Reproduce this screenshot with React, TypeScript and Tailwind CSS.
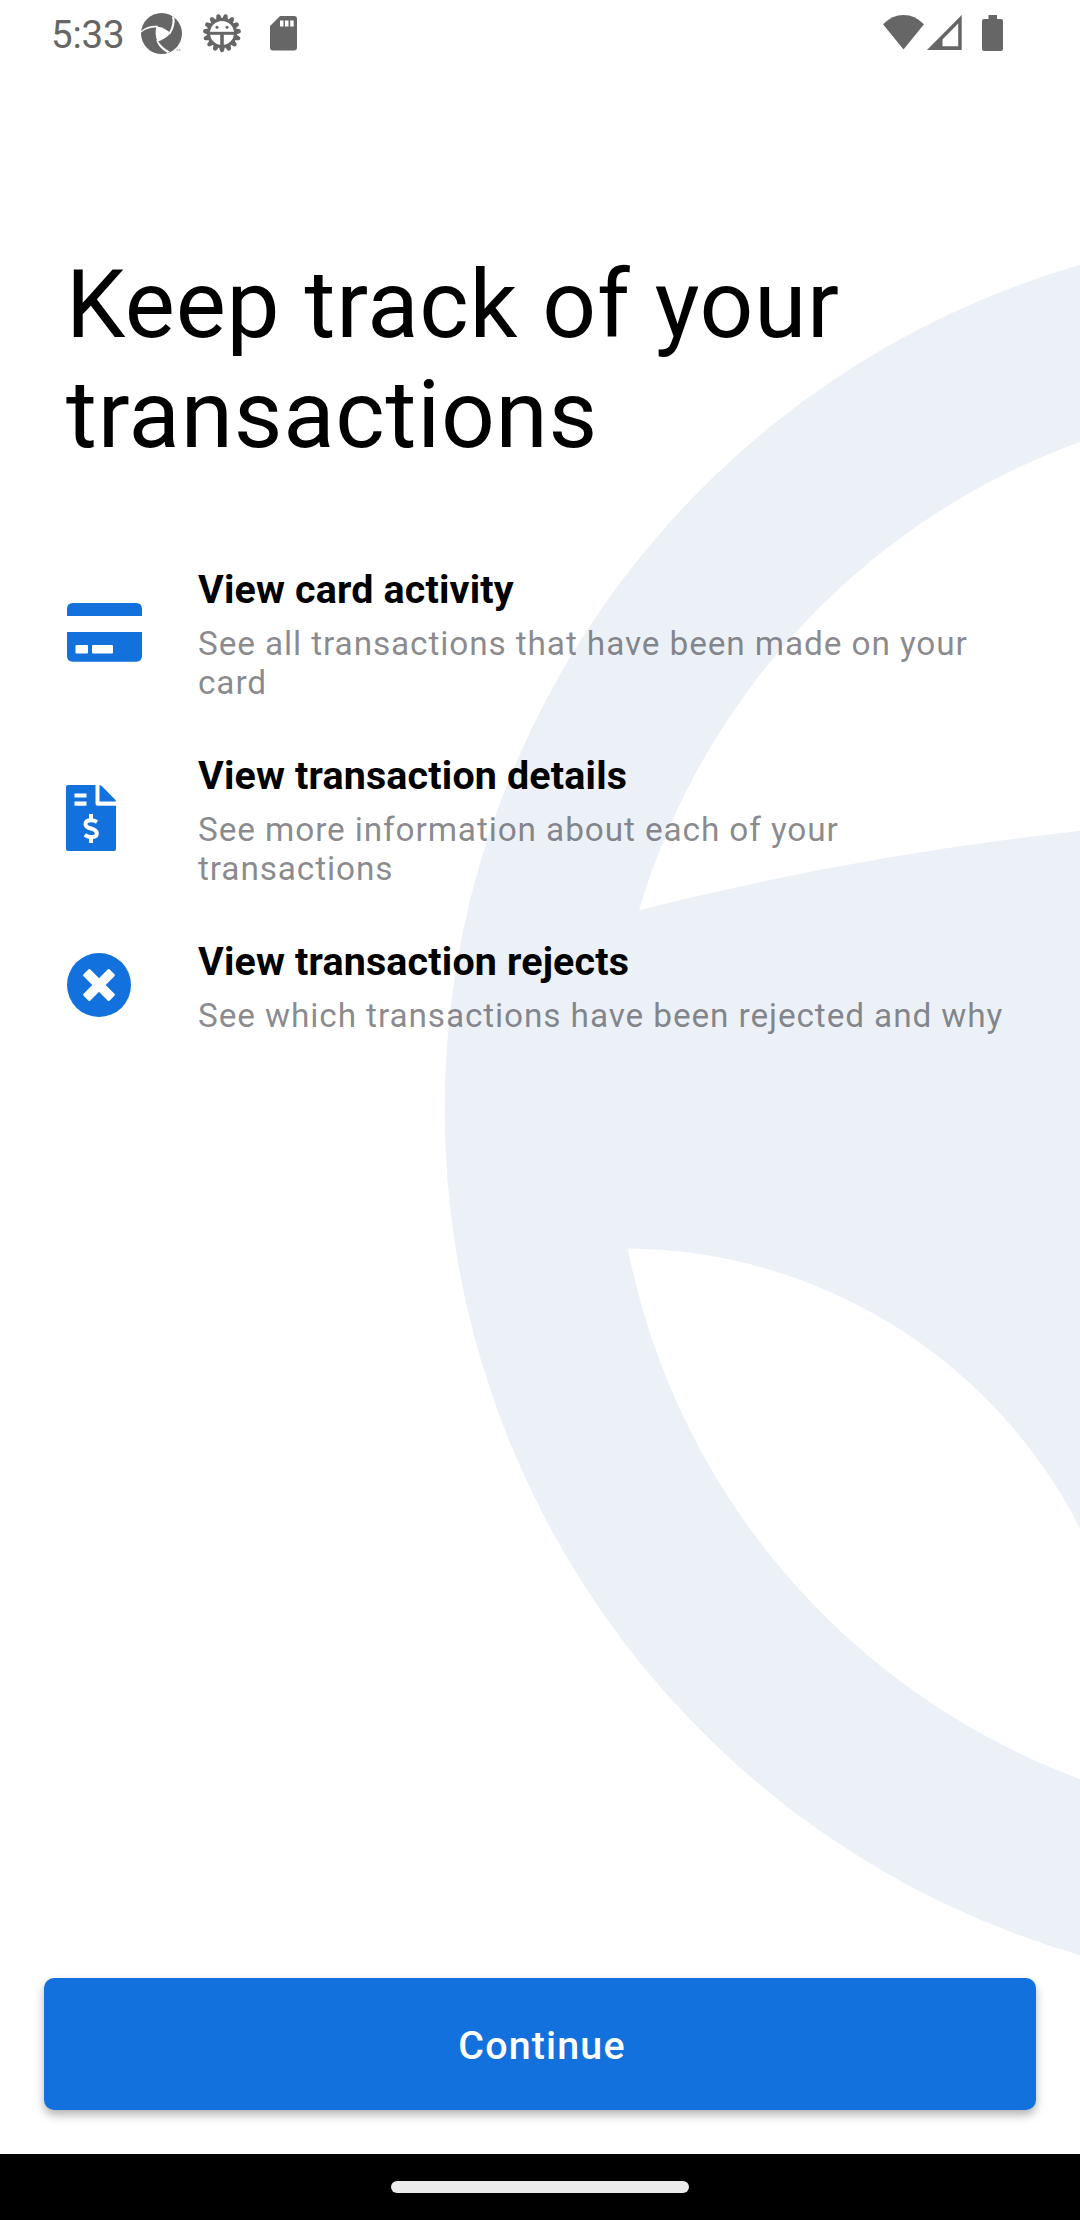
import type { ReactNode } from "react";

function Backdrop() {
  return (
    <svg className="pointer-events-none absolute inset-0" width="1080" height="2220" viewBox="0 0 1080 2220">
      <path
        fill="#ecf1f8"
        fillRule="evenodd"
        d="M1080 264.7A880 880 0 0 0 1080 1955.3ZM639 910.3A713.5 713.5 0 0 1 1090 438.5V830A3136 3136 0 0 0 639 910.3ZM627.8 1248.5A512 512 0 0 1 1080 1528.3V1779A713 713 0 0 1 627.8 1248.5Z"
      />
    </svg>
  );
}

function ApertureIcon() {
  return (
    <svg width="42" height="42" viewBox="0 0 42 42" className="shrink-0">
      <circle cx="20.5" cy="20.5" r="20.5" fill="#666" />
      <g fill="#fff">
        <path d="M15.500 13.300Q24 15 29.700 20.300Q24 26.500 16.500 28.800Q13.300 21 15.500 13.300Z" />
        <path d="M0 18Q7 12 17 12.800L16 14.500Q7 14 0 19.500Z" />
        <path d="M31 3L33.500 5Q34.500 13 29.500 20.700L28 19.500Q33 11.500 31 3Z" />
        <path d="M15.200 27L16.800 27.800Q21 34.500 29 38.800L26.500 40Q17.500 35 15.200 27Z" />
      </g>
      <path d="M35.500 37h1.800M38 37h1.500" stroke="#888" strokeWidth="1" />
    </svg>
  );
}

function GearIcon() {
  const teeth = Array.from({ length: 15 }, (_, i) => i * 24);
  return (
    <svg width="40" height="40" viewBox="-20 -20 40 40" className="shrink-0">
      <g fill="#666">
        {teeth.map((a) => (
          <path key={a} d="M-3 14L-1.800 18.300Q0 20 1.800 18.300L3 14Z" transform={`rotate(${a})`} />
        ))}
      </g>
      <circle r="13.500" fill="#fff" stroke="#666" strokeWidth="3" />
      <path d="M-13 0.300H13" stroke="#666" strokeWidth="3" />
      <path d="M0 0V13" stroke="#666" strokeWidth="3.600" />
      <circle cx="-5" cy="-5.800" r="1.500" fill="#666" />
      <circle cx="5" cy="-5.800" r="1.500" fill="#666" />
    </svg>
  );
}

function SdIcon() {
  return (
    <svg width="27" height="35" viewBox="0 0 27 35" className="shrink-0">
      <path
        fill="#666"
        fillRule="evenodd"
        d="M10 0H24Q27 0 27 3V31.500Q27 34.500 24 34.500H3Q0 34.500 0 31.500V10ZM10 4.500V10.500H13.500V4.500ZM15 4.500V10.500H18.500V4.500ZM20.200 4.500V10.500H23.700V4.500Z"
      />
    </svg>
  );
}

function StatusBar() {
  return (
    <header className="flex h-[66px] items-start pl-[51px] pr-[77px] text-[#666]">
      <span className="mt-[12px] w-[90px] text-[38.500px] leading-[45px] tracking-[-0.200px]">5:33</span>
      <div className="mt-[13px]">
        <ApertureIcon />
      </div>
      <div className="ml-[19px] mt-[13px]">
        <GearIcon />
      </div>
      <div className="ml-[28px] mt-[16px]">
        <SdIcon />
      </div>
      <svg className="ml-auto mt-[15px] shrink-0" width="120" height="36" viewBox="0 0 120 36">
        <g fill="#666">
          <path d="M0 9.300Q9 0 20.500 0Q32 0 41 9.300L20.500 34.500Z" />
          <path fillRule="evenodd" d="M78.700 0V35H44ZM75.200 8.500L59.500 24.500V31.200H75.200Z" />
          <path d="M105.500 0H114V4H118Q120 4 120 6V33.500Q120 36 118 36H101Q99 36 99 33.500V6Q99 4 101 4H105.500Z" />
        </g>
      </svg>
    </header>
  );
}

function CardIcon() {
  return (
    <svg className="ml-px" width="75" height="59" viewBox="0 0 75 59">
      <path
        fill="#1371de"
        fillRule="evenodd"
        d="M0 13V6Q0 0 6 0H69Q75 0 75 6V13ZM0 29H75V53Q75 58.700 69 58.700H6Q0 58.700 0 53ZM9.500 42Q8.500 42 8.500 43V49.500Q8.500 50.500 9.500 50.500H20Q21 50.500 21 49.500V43Q21 42 20 42ZM26 42Q25 42 25 43V49.500Q25 50.500 26 50.500H45Q46 50.500 46 49.500V43Q46 42 45 42Z"
      />
    </svg>
  );
}

function InvoiceIcon() {
  return (
    <svg width="50" height="66" viewBox="0 0 50 66">
      <path d="M2 0H29.500V18.500Q29.500 20.800 31.800 20.800H50V64Q50 66 48 66H2Q0 66 0 64V2Q0 0 2 0Z" fill="#1371de" />
      <path d="M33.500 0Q35 0.200 36 1.200L49 14.500Q50 15.500 50 16.500H33.500Z" fill="#1371de" />
      <path d="M8.500 10.500H20.500M8.500 18.600H20.500" stroke="#fff" strokeWidth="4.200" />
      <path d="M25 29V34M25 53V58" stroke="#fff" strokeWidth="4" />
      <path
        d="M31 37Q28 35.300 25 35.300Q19.500 35.300 19.500 39.200Q19.500 42 25 43.500Q30.800 45 30.800 48.500Q30.800 52 25.500 52Q22 52 18.800 49.800"
        fill="none"
        stroke="#fff"
        strokeWidth="4"
      />
    </svg>
  );
}

function RejectIcon() {
  return (
    <svg className="ml-px" width="64" height="64" viewBox="-32 -32 64 64">
      <circle r="32" fill="#1371de" />
      <g fill="#fff" transform="rotate(45)">
        <rect x="-18.500" y="-4.800" width="37" height="9.600" rx="1.500" />
        <rect x="-4.800" y="-18.500" width="9.600" height="37" rx="1.500" />
      </g>
    </svg>
  );
}

type FeatureProps = { icon: ReactNode; title: string; children: ReactNode };

function Feature({ icon, title, children }: FeatureProps) {
  return (
    <li className="flex">
      <div className="flex w-[132px] shrink-0 items-center pb-[5px]">{icon}</div>
      <div>
        <h2 className="text-[39.400px] font-bold leading-[46px] tracking-[0.170px] text-black">{title}</h2>
        <p className="mt-[11px] text-[33.400px] leading-[39px] tracking-[0.880px] text-[#3c3c43]/60">{children}</p>
      </div>
    </li>
  );
}

export default function App() {
  return (
    <div className="relative h-[2220px] w-[1080px] overflow-hidden bg-white font-['Roboto',sans-serif]">
      <Backdrop />
      <div className="relative flex h-full flex-col">
        <StatusBar />
        <main className="flex grow flex-col pl-[66px]">
          <h1 className="mt-[184px] text-[94.500px] leading-[110px] tracking-[0.750px] text-black">
            Keep track of your
            <br />
            transactions
          </h1>
          <ul className="mt-[97px] flex flex-col gap-[51px]">
            <Feature icon={<CardIcon />} title="View card activity">
              See all transactions that have been made on your
              <br />
              card
            </Feature>
            <Feature icon={<InvoiceIcon />} title="View transaction details">
              See more information about each of your
              <br />
              transactions
            </Feature>
            <Feature icon={<RejectIcon />} title="View transaction rejects">
              See which transactions have been rejected and why
            </Feature>
          </ul>
        </main>
        <div className="px-[44px] pb-[44px]">
          <button className="flex h-[132px] w-full items-center justify-center rounded-[10px] bg-[#1371de] pl-[4px] pt-[3px] text-[39.400px] font-medium tracking-[1.150px] text-white shadow-[0_5px_10px_rgba(0,0,0,0.3)]">
            Continue
          </button>
        </div>
        <footer className="flex h-[66px] items-center justify-center bg-black">
          <div className="h-[12px] w-[298px] rounded-full bg-[#ebebeb]" />
        </footer>
      </div>
    </div>
  );
}
